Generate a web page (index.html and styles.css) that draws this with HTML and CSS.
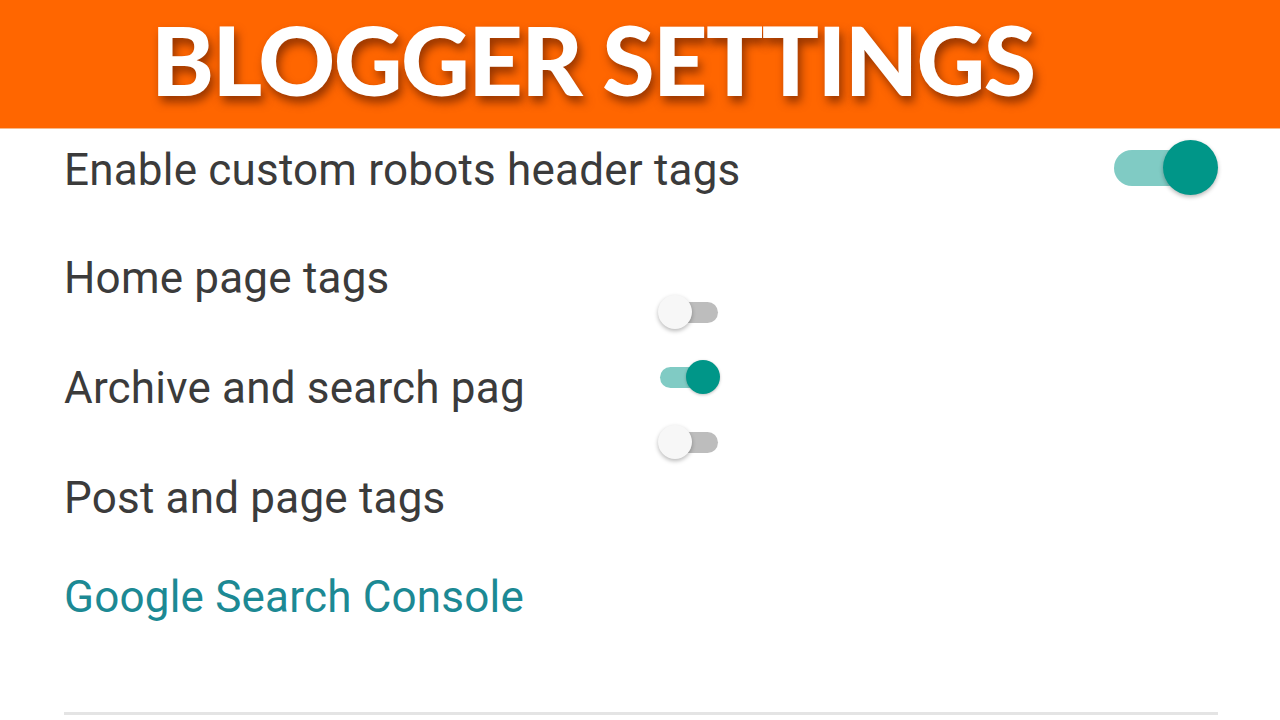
FILE: index.html
```html
<!DOCTYPE html>
<html lang="en">
<head>
<meta charset="utf-8">
<title>Blogger Settings</title>
<link rel="stylesheet" href="styles.css">
</head>
<body>
<header class="banner">
  <h1 class="banner-title">BLOGGER SETTINGS</h1>
</header>
<main class="settings">
  <div class="row row-main">
    <span class="label">Enable custom robots header tags</span>
    <span class="switch switch-lg on"><span class="track"></span><span class="knob"></span></span>
  </div>
  <div class="group">
    <div class="labels">
      <div class="label row-sub">Home page tags</div>
      <div class="label row-sub">Archive and search pag</div>
      <div class="label row-sub">Post and page tags</div>
    </div>
    <div class="switches">
      <span class="switch switch-sm"><span class="track"></span><span class="knob"></span></span>
      <span class="switch switch-sm on"><span class="track"></span><span class="knob"></span></span>
      <span class="switch switch-sm"><span class="track"></span><span class="knob"></span></span>
    </div>
  </div>
  <a class="link" href="#">Google Search Console</a>
  <hr class="divider">
</main>
</body>
</html>
```

FILE: styles.css
```css
html, body {
  margin: 0;
  padding: 0;
  background: #ffffff;
}
body {
  width: 1280px;
  height: 720px;
  overflow: hidden;
  font-family: Roboto, "Noto Sans", sans-serif;
}
.banner {
  height: 129px;
  background: #ff6600;
  display: flex;
  align-items: flex-start;
  padding: 12px 0 0 151px;
  box-sizing: border-box;
  border-bottom: 1px solid #f7b98a;
}
.banner-title {
  margin: 0;
  font-family: Lato, "Open Sans", sans-serif;
  font-weight: 900;
  font-size: 95px;
  line-height: 1;
  color: #ffffff;
  letter-spacing: -1.6px;
  text-shadow: 3px 6px 10px rgba(110, 35, 0, 0.75);
}
.settings {
  padding: 0 62px 0 64px;
}
.label {
  font-size: 44px;
  color: #3b3b3b;
  letter-spacing: 0.2px;
}
.row-main {
  display: flex;
  justify-content: space-between;
  align-items: flex-start;
  height: 94px;
}
.row-main .label {
  line-height: 82px;
}
.row-main .switch {
  margin-top: 11px;
}
.group {
  display: grid;
  grid-template-columns: 594px auto;
  align-items: start;
}
.labels {
  display: flex;
  flex-direction: column;
}
.row-sub {
  height: 110px;
  line-height: 110px;
}
.switches {
  display: flex;
  flex-direction: column;
  gap: 31px;
  padding-top: 72px;
}
.switch {
  position: relative;
  display: inline-block;
}
.switch .track {
  position: absolute;
  border-radius: 999px;
  background: #bdbdbd;
}
.switch .knob {
  position: absolute;
  border-radius: 50%;
  background: #f7f7f7;
  box-shadow: 0 2px 4px rgba(0, 0, 0, 0.28);
}
.switch.on .track {
  background: #80cbc4;
}
.switch.on .knob {
  background: #009688;
}
.switch-lg {
  width: 104px;
  height: 55px;
}
.switch-lg .track {
  left: 0;
  top: 10px;
  width: 75px;
  height: 36px;
}
.switch-lg .knob {
  right: 0;
  top: 0;
  width: 55px;
  height: 55px;
}
.switch-sm {
  width: 62px;
  height: 34px;
}
.switch-sm .track {
  left: 14px;
  top: 7px;
  width: 46px;
  height: 21px;
}
.switch-sm .knob {
  left: 0;
  top: 0;
  width: 34px;
  height: 34px;
}
.switch-sm.on .track {
  left: 2px;
}
.switch-sm.on .knob {
  left: auto;
  right: 0;
  box-shadow: 0 1px 3px rgba(0, 0, 0, 0.25);
}
.link {
  display: block;
  font-size: 44px;
  color: #1c8994;
  text-decoration: none;
  height: 155px;
  line-height: 80px;
  margin-top: 4px;
  letter-spacing: 0.2px;
}
.divider {
  margin: 0;
  border: 0;
  height: 3px;
  background: #e4e4e4;
}
```
